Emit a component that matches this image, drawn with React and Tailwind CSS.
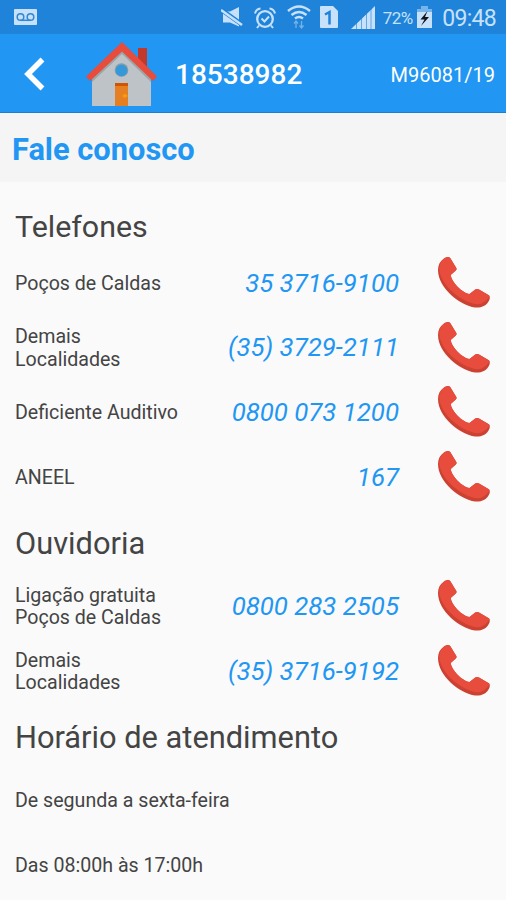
const sections = [
  {
    title: "Telefones",
    rows: [
      { label: ["Poços de Caldas"], phone: "35 3716-9100" },
      { label: ["Demais", "Localidades"], phone: "(35) 3729-2111" },
      { label: ["Deficiente Auditivo"], phone: "0800 073 1200" },
      { label: ["ANEEL"], phone: "167" },
    ],
  },
  {
    title: "Ouvidoria",
    rows: [
      { label: ["Ligação gratuita", "Poços de Caldas"], phone: "0800 283 2505" },
      { label: ["Demais", "Localidades"], phone: "(35) 3716-9192" },
    ],
  },
];

const hours = ["De segunda a sexta-feira", "Das 08:00h às 17:00h"];

function PhoneIcon() {
  return (
    <svg viewBox="0 0 52 52" className="-mt-[2px] h-[52px] w-[52px] shrink-0">
      <path
        d="M6 2.500C8 1 11 .5 12.200 1.900L18.300 12C18.800 13 18.500 14 17.500 14.700L12.700 19C13.500 26 24 37 31.500 38L37.300 33.500C38.300 32.800 39.800 32.800 41 33.500L50.800 39.300C52 40.300 52 42 51.500 43.500C49 50 43 52 37 51.500C22 49.500 0 32 0 14C0 9 2 5 6 2.500Z"
        fill="#cb4232"
      />
      <path
        d="M7 2C9 1 11.200 .8 12.200 1.900L18.300 12C18.800 13 18.500 14 17.500 14.700L12.700 19C13.500 26 24 37 31.500 38L37.300 33.500C38.300 32.800 39.800 32.800 41 33.500L50.800 39.300C51.800 40 51.500 41 50.500 42C45 48.500 40 49 35 47.500C20 43.500 3 28 1.300 14C1 9 3 4.500 7 2Z"
        fill="#e74c3c"
      />
    </svg>
  );
}

function HouseIcon() {
  return (
    <svg viewBox="0 0 72 66" className="mt-[3px] h-[66px] w-[72px]">
      <path d="M52 6h9v22l-9-9z" fill="#c0392b" />
      <path d="M6 34 36 7l29 27v30H6z" fill="#bdc3c7" />
      <path d="M6 40v-6L36 7l29 27v6L36 12z" fill="#9aa7a9" />
      <path d="M36 0 0 34.500 4 39 36 9.500 67 39l4-4.500z" fill="#e74c3c" />
      <circle cx="35.500" cy="28" r="6.800" fill="#7f9ca8" />
      <circle cx="35.500" cy="28.500" r="5.800" fill="#3498db" />
      <path d="M29 41h13v23H29z" fill="#e67e22" />
      <path d="M29 41h13v3H29z" fill="#d35400" />
      <path d="m36 54 3-2.500 3 2.500-3 2z" fill="#f39c12" />
    </svg>
  );
}

function StatusBar() {
  return (
    <div className="flex h-[34px] items-center bg-[#1e83d9] pl-[14px] pr-[10px] text-[#c7e1fa]">
      <svg viewBox="0 0 23 16" className="h-4 w-[23px]">
        <rect width="23" height="16" rx="1" fill="currentColor" />
        <g fill="none" stroke="#2f88d3" strokeWidth="1.500">
          <circle cx="6.500" cy="8" r="3.300" />
          <circle cx="16.500" cy="8" r="3.300" />
          <path d="M6.500 11.300h10" />
        </g>
      </svg>

      <svg viewBox="0 0 22 20" className="ml-auto mr-[11px] h-5 w-[22px]">
        <path d="M2 4.500h7L18 0v19.500L9 15.500H2z" fill="currentColor" />
        <path d="M-1 1.800 22 18.200" stroke="#1e83d9" strokeWidth="4.600" />
        <path d="M0 3 21 18" stroke="currentColor" strokeWidth="2.500" />
      </svg>

      <svg viewBox="0 0 22 22" className="mr-[11px] mt-[2px] h-[22px] w-[22px]" fill="none" stroke="currentColor">
        <circle cx="11" cy="12" r="7.800" strokeWidth="2.300" />
        <path d="m7.500 11.500 3 3 4.500-5" strokeWidth="2" />
        <path d="M1 6.500Q2 2 6.500 1.500M21 6.500Q20 2 15.500 1.500M5 18.500 3 21M17 18.500l2 2.500" strokeWidth="2" />
      </svg>

      <svg viewBox="0 0 24 24" className="mr-[9px] h-6 w-6" fill="none" stroke="currentColor">
        <path d="M1 6Q12-3 23 6M4.500 10Q12 4 19.500 10M8 13.500Q12 10.500 16 13.500" strokeWidth="2.400" />
        <path d="M9 16v7M14.500 16v7M7 18.500 9 16l2 2.500M12.500 20.500l2 2.500 2-2.500" strokeWidth="1.300" opacity=".5" />
      </svg>

      <svg viewBox="0 0 18 22" className="mr-[13px] h-[22px] w-[18px]">
        <path d="M1 0h12l5 5v16a1 1 0 0 1-1 1H1a1 1 0 0 1-1-1V1a1 1 0 0 1 1-1z" fill="currentColor" />
        <path d="M5 8.500 9.500 6v12.500" fill="none" stroke="#1e83d9" strokeWidth="2.500" />
      </svg>

      <svg viewBox="0 0 24 23" className="mr-[8px] h-[23px] w-6">
        <path d="M0 23 24 0v23z" fill="currentColor" />
        <path d="M5.500 12v11M10.500 8v15M15.500 4v19M20 1v22" stroke="#1e83d9" strokeWidth="1" opacity=".6" />
      </svg>

      <span className="mt-[3px] w-[34.5px] text-[17px] leading-none tracking-[-0.6px]">72%</span>

      <svg viewBox="0 0 15 22" className="mr-[10px] h-[22px] w-[15px]">
        <path d="M4 0h7v3h4v4H0V3h4z" fill="#75b5ec" />
        <path d="M0 6h15v16H0z" fill="currentColor" />
        <path d="m10.500 5-7 8.500h4L4 20l8-9H8z" fill="#10151c" />
      </svg>

      <span className="mt-[3px] text-[23px] leading-none tracking-[-0.7px]">09:48</span>
    </div>
  );
}

function Header() {
  return (
    <header className="flex h-[79px] items-center border-b border-[#1b7fd2] bg-[#2196f3] pr-[11px] text-white">
      <svg viewBox="0 0 22 34" className="ml-[24px] mr-[40px] mt-[2px] h-[34px] w-[22px]">
        <path d="M18.500 2.500 4 17l14.500 14.500" fill="none" stroke="currentColor" strokeWidth="5.500" />
      </svg>
      <HouseIcon />
      <span className="ml-[17px] mt-[4px] text-[28px] font-medium">18538982</span>
      <span className="ml-auto mt-[4px] text-[20px]">M96081/19</span>
    </header>
  );
}

function SectionTitle({ children }) {
  return <h2 className="flex h-[64.7px] items-center pt-[4px] text-[30.8px]">{children}</h2>;
}

function ContactRow({ label, phone }) {
  return (
    <div className="flex h-[64.7px] items-center">
      <p className="pt-[2px] text-[19.6px] leading-[22.5px]">
        {label.map((line) => (
          <span key={line} className="block">
            {line}
          </span>
        ))}
      </p>
      <span className="ml-auto mr-[39px] text-[25.8px] italic text-[#2196f3]">{phone}</span>
      <PhoneIcon />
    </div>
  );
}

export default function App() {
  return (
    <div className="h-[900px] w-[506px] overflow-hidden bg-[#fafafa] font-['Roboto',sans-serif] text-[#444444]">
      <StatusBar />
      <Header />
      <h1 className="flex h-[69px] items-center bg-[#f5f5f5] pt-[6px] pl-[12px] text-[30.8px] font-bold text-[#2196f3]">
        Fale conosco
      </h1>
      <main className="pl-[15px] pr-[16px] pt-[4px]">
        {sections.map((section, i) => (
          <section key={section.title}>
            {i === 0 ? (
              <h2 className="flex h-[64.7px] items-center pt-[17px] text-[30.4px]">{section.title}</h2>
            ) : (
              <SectionTitle>{section.title}</SectionTitle>
            )}
            {section.rows.map((row) => (
              <ContactRow key={row.phone} {...row} />
            ))}
          </section>
        ))}
        <section>
          <SectionTitle>Horário de atendimento</SectionTitle>
          {hours.map((line) => (
            <p key={line} className="flex h-[64.7px] items-center pt-[1px] text-[19.6px]">
              {line}
            </p>
          ))}
        </section>
      </main>
    </div>
  );
}
